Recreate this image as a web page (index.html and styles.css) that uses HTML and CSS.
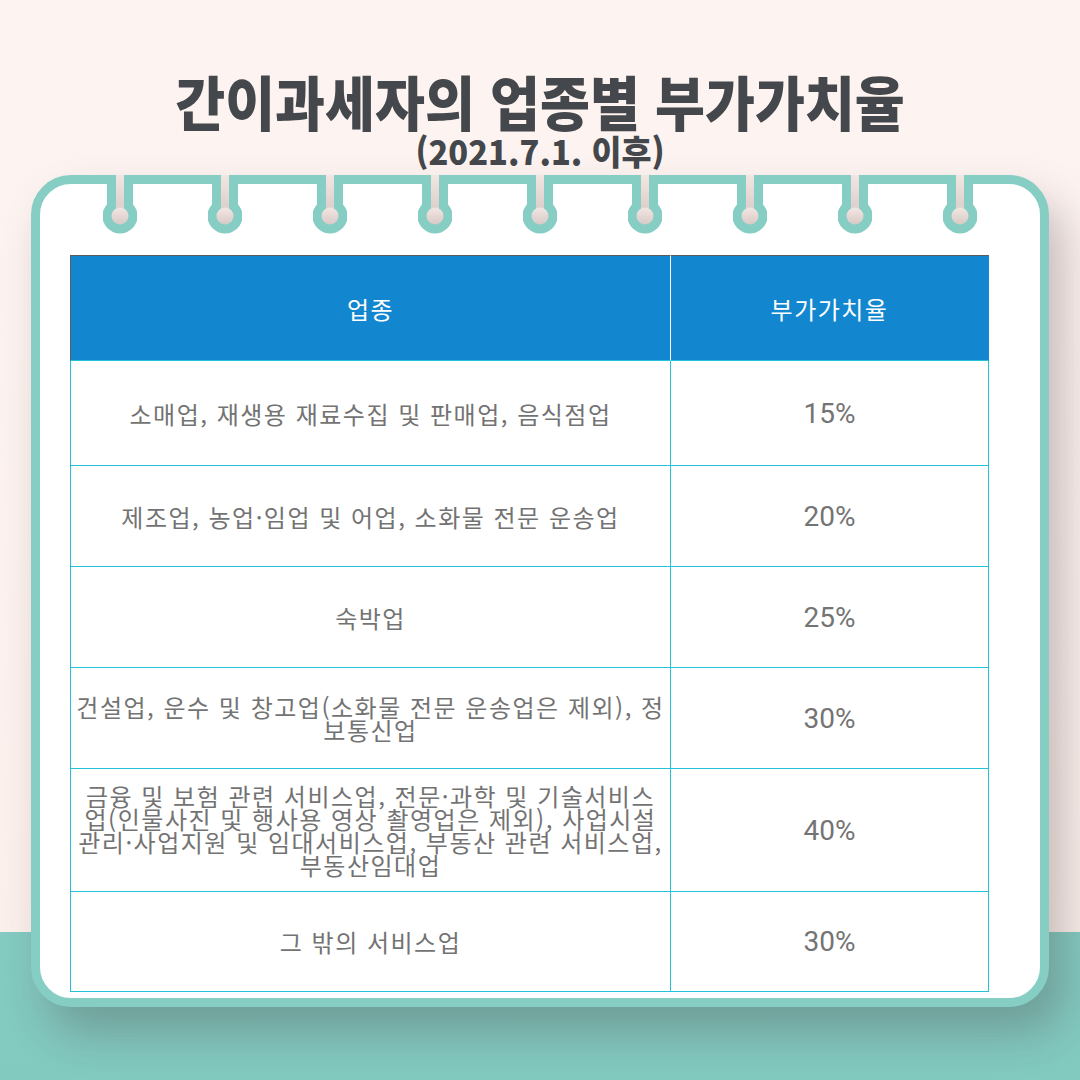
FILE: index.html
```html
<!DOCTYPE html>
<html lang="ko">
<head>
<meta charset="utf-8">
<title>간이과세자의 업종별 부가가치율</title>
<link rel="stylesheet" href="styles.css">
</head>
<body>
<svg class="defs" width="0" height="0" aria-hidden="true">
  <defs>
    <linearGradient id="hole" x1="0" y1="0" x2="0" y2="1">
      <stop offset="0" stop-color="#f2e6e3"/>
      <stop offset="1" stop-color="#d8cac6"/>
    </linearGradient>
  </defs>
</svg>
<div class="page">
  <header class="heading">
    <h1 class="title">간이과세자의 업종별 부가가치율</h1>
    <p class="subtitle">(2021.7.1. 이후)</p>
  </header>
  <section class="card">
    <div class="rings">
      <svg class="ring" viewBox="0 0 34 60" width="34" height="60"><rect x="4" y="0" width="26" height="40" fill="#86cdc4"/><circle cx="17" cy="41" r="17.5" fill="#86cdc4"/><rect x="13" y="0" width="8" height="41" fill="url(#hole)"/><circle cx="17" cy="41" r="8.5" fill="url(#hole)"/></svg>
      <svg class="ring" viewBox="0 0 34 60" width="34" height="60"><rect x="4" y="0" width="26" height="40" fill="#86cdc4"/><circle cx="17" cy="41" r="17.5" fill="#86cdc4"/><rect x="13" y="0" width="8" height="41" fill="url(#hole)"/><circle cx="17" cy="41" r="8.5" fill="url(#hole)"/></svg>
      <svg class="ring" viewBox="0 0 34 60" width="34" height="60"><rect x="4" y="0" width="26" height="40" fill="#86cdc4"/><circle cx="17" cy="41" r="17.5" fill="#86cdc4"/><rect x="13" y="0" width="8" height="41" fill="url(#hole)"/><circle cx="17" cy="41" r="8.5" fill="url(#hole)"/></svg>
      <svg class="ring" viewBox="0 0 34 60" width="34" height="60"><rect x="4" y="0" width="26" height="40" fill="#86cdc4"/><circle cx="17" cy="41" r="17.5" fill="#86cdc4"/><rect x="13" y="0" width="8" height="41" fill="url(#hole)"/><circle cx="17" cy="41" r="8.5" fill="url(#hole)"/></svg>
      <svg class="ring" viewBox="0 0 34 60" width="34" height="60"><rect x="4" y="0" width="26" height="40" fill="#86cdc4"/><circle cx="17" cy="41" r="17.5" fill="#86cdc4"/><rect x="13" y="0" width="8" height="41" fill="url(#hole)"/><circle cx="17" cy="41" r="8.5" fill="url(#hole)"/></svg>
      <svg class="ring" viewBox="0 0 34 60" width="34" height="60"><rect x="4" y="0" width="26" height="40" fill="#86cdc4"/><circle cx="17" cy="41" r="17.5" fill="#86cdc4"/><rect x="13" y="0" width="8" height="41" fill="url(#hole)"/><circle cx="17" cy="41" r="8.5" fill="url(#hole)"/></svg>
      <svg class="ring" viewBox="0 0 34 60" width="34" height="60"><rect x="4" y="0" width="26" height="40" fill="#86cdc4"/><circle cx="17" cy="41" r="17.5" fill="#86cdc4"/><rect x="13" y="0" width="8" height="41" fill="url(#hole)"/><circle cx="17" cy="41" r="8.5" fill="url(#hole)"/></svg>
      <svg class="ring" viewBox="0 0 34 60" width="34" height="60"><rect x="4" y="0" width="26" height="40" fill="#86cdc4"/><circle cx="17" cy="41" r="17.5" fill="#86cdc4"/><rect x="13" y="0" width="8" height="41" fill="url(#hole)"/><circle cx="17" cy="41" r="8.5" fill="url(#hole)"/></svg>
      <svg class="ring" viewBox="0 0 34 60" width="34" height="60"><rect x="4" y="0" width="26" height="40" fill="#86cdc4"/><circle cx="17" cy="41" r="17.5" fill="#86cdc4"/><rect x="13" y="0" width="8" height="41" fill="url(#hole)"/><circle cx="17" cy="41" r="8.5" fill="url(#hole)"/></svg>
    </div>
    <div class="rate-table">
      <div class="cell head first">업종</div>
      <div class="cell head last">부가가치율</div>

      <div class="cell first">소매업, 재생용 재료수집 및 판매업, 음식점업</div>
      <div class="cell last num">15%</div>

      <div class="cell first">제조업, 농업·임업 및 어업, 소화물 전문 운송업</div>
      <div class="cell last num">20%</div>

      <div class="cell first">숙박업</div>
      <div class="cell last num">25%</div>

      <div class="cell first">건설업, 운수 및 창고업(소화물 전문 운송업은 제외), 정<br>보통신업</div>
      <div class="cell last num">30%</div>

      <div class="cell first">금융 및 보험 관련 서비스업, 전문·과학 및 기술서비스<br>업(인물사진 및 행사용 영상 촬영업은 제외), 사업시설<br>관리·사업지원 및 임대서비스업, 부동산 관련 서비스업,<br>부동산임대업</div>
      <div class="cell last num">40%</div>

      <div class="cell first">그 밖의 서비스업</div>
      <div class="cell last num">30%</div>
    </div>
  </section>
</div>
</body>
</html>
```

FILE: styles.css
```css
html, body {
  margin: 0;
  padding: 0;
}

body {
  width: 1080px;
  height: 1080px;
  overflow: hidden;
  font-family: "Noto Sans CJK KR", "Noto Sans", sans-serif;
}

.defs {
  position: absolute;
  width: 0;
  height: 0;
}

.page {
  width: 1080px;
  height: 1080px;
  box-sizing: border-box;
  padding-top: 70px;
  background:
    linear-gradient(to bottom, #fdf4f1 0, #fcf0ed 932px, #84cbc2 932px, #82c9c0 1080px);
}

.heading {
  text-align: center;
  color: #44474b;
}

.title {
  margin: 0;
  font-size: 59px;
  line-height: 62px;
  font-weight: 900;
  letter-spacing: 0;
  transform: scaleX(0.92);
}

.subtitle {
  margin: 0;
  font-size: 34px;
  line-height: 38px;
  font-weight: 900;
  transform: scaleX(0.96);
}

.card {
  position: relative;
  margin: 5px 0 0 31px;
  width: 1018px;
  box-sizing: border-box;
  border: 9px solid #86cdc4;
  border-radius: 40px;
  background: #ffffff;
  padding: 71px 51px 6px 30px;
  box-shadow: 16px 26px 44px rgba(60, 45, 45, 0.28);
}

.rings {
  position: absolute;
  top: -9px;
  left: 63px;
  display: flex;
  gap: 71px;
}

.ring {
  display: block;
}

.rate-table {
  display: grid;
  grid-template-columns: 601px 318px;
  grid-template-rows: 106px 105px 101px 101px 101px 123px 100px;
}

.cell {
  box-sizing: border-box;
  display: flex;
  align-items: center;
  justify-content: center;
  text-align: center;
  border-bottom: 1px solid #22c3d8;
  border-right: 1px solid #22c3d8;
  color: #737373;
  font-size: 24px;
  line-height: 23px;
  letter-spacing: 1.5px;
  font-weight: 400;
}

.cell.first {
  border-left: 1px solid #22c3d8;
}

.cell.head {
  background: #1287cf;
  color: #ffffff;
  border-top: 1px solid #5c5c5c;
}

.cell.head.first {
  border-left-color: #5c5c5c;
  border-right-color: #ffffff;
}

.cell.head.last {
  border-right-color: #1287cf;
}

.cell.num {
  font-family: Roboto, "Noto Sans", sans-serif;
  font-size: 28px;
  letter-spacing: 0;
  color: #747474;
}
```
